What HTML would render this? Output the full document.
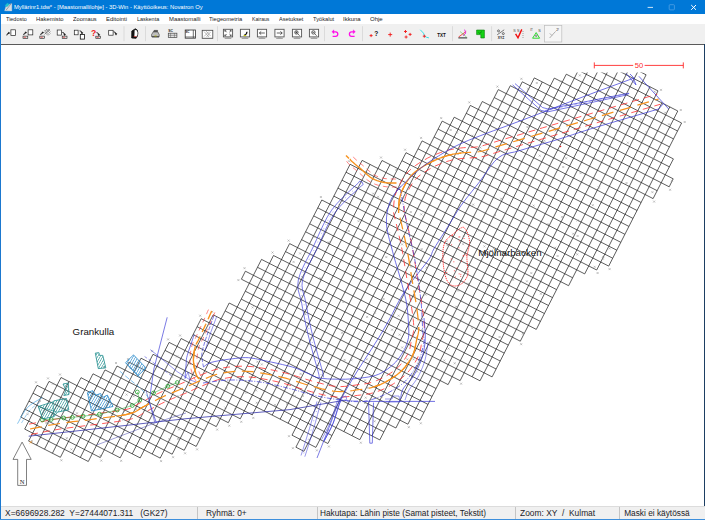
<!DOCTYPE html>
<html><head><meta charset="utf-8"><title>3D-Win</title>
<style>
html,body{margin:0;padding:0;width:705px;height:520px;overflow:hidden;background:#fff;font-family:"Liberation Sans",sans-serif;}
#app{position:relative;width:705px;height:520px;overflow:hidden;background:#fff}

.t{position:absolute;white-space:nowrap;line-height:1;transform-origin:0 50%;display:block}
#title{position:absolute;left:0;top:0;width:705px;height:14.4px;background:#0078d7}
#menu{position:absolute;left:0;top:14.4px;width:705px;height:9.3px;background:#fff}
#tool{position:absolute;left:0;top:23.7px;width:705px;height:20.3px;background:#f0f0f0}
#toolline{position:absolute;left:1px;top:43.9px;width:703px;height:1px;background:#5a5a5a}
#status{position:absolute;left:0;top:505.6px;width:705px;height:14.4px;background:#f0f0f0;border-top:0.6px solid #dcdcdc;box-sizing:border-box}
#lborder{position:absolute;left:0;top:14px;width:1.2px;height:506px;background:#1b78cf}
#rborder{position:absolute;left:704.2px;top:44px;width:0.8px;height:462px;background:#1d3f63}
#bborder{position:absolute;left:0;top:519.3px;width:705px;height:0.7px;background:#3d8fdc}
.ssep{position:absolute;top:506.8px;width:0.8px;height:12.4px;background:#c4c4c4}

</style></head><body><div id="app">
<div id="title"></div>
<div id="menu"></div>
<div id="tool"></div>
<div id="toolline"></div>
<div id="status"></div>
<div id="lborder"></div><div id="rborder"></div><div id="bborder"></div>
<span class="t" style="left:14.40px;top:4.35px;font-size:6.20px;color:#fff;transform:scaleX(0.9393);">Myllärinr1.tdw* - [Maastomallilohje] - 3D-Win - Käyttöoikeus: Novatron Oy</span>
<span class="t" style="left:5.60px;top:16.22px;font-size:6.00px;color:#222;transform:scaleX(0.9083);">Tiedosto</span>
<span class="t" style="left:35.70px;top:16.22px;font-size:6.00px;color:#222;transform:scaleX(0.9739);">Hakemisto</span>
<span class="t" style="left:72.80px;top:16.22px;font-size:6.00px;color:#222;transform:scaleX(0.9477);">Zoomaus</span>
<span class="t" style="left:106.00px;top:16.22px;font-size:6.00px;color:#222;transform:scaleX(0.9838);">Editointi</span>
<span class="t" style="left:136.60px;top:16.22px;font-size:6.00px;color:#222;transform:scaleX(0.9117);">Laskenta</span>
<span class="t" style="left:168.50px;top:16.22px;font-size:6.00px;color:#222;transform:scaleX(0.9841);">Maastomalli</span>
<span class="t" style="left:208.80px;top:16.22px;font-size:6.00px;color:#222;transform:scaleX(0.9543);">Tiegeometria</span>
<span class="t" style="left:252.00px;top:16.22px;font-size:6.00px;color:#222;transform:scaleX(0.8553);">Kairaus</span>
<span class="t" style="left:279.00px;top:16.22px;font-size:6.00px;color:#222;transform:scaleX(0.9224);">Asetukset</span>
<span class="t" style="left:312.80px;top:16.22px;font-size:6.00px;color:#222;transform:scaleX(0.9488);">Työkalut</span>
<span class="t" style="left:343.40px;top:16.22px;font-size:6.00px;color:#222;transform:scaleX(0.9957);">Ikkuna</span>
<span class="t" style="left:370.00px;top:16.22px;font-size:6.00px;color:#222;transform:scaleX(1.0021);">Ohje</span>
<span class="t" style="left:5.00px;top:509.37px;font-size:8.30px;color:#1c1c28;transform:scaleX(1.0168);white-space:pre;">X=6696928.282&nbsp; Y=27444071.311&nbsp;  (GK27)</span>
<span class="t" style="left:205.80px;top:509.37px;font-size:8.30px;color:#1c1c28;transform:scaleX(1.0083);white-space:pre;">Ryhmä: 0+</span>
<span class="t" style="left:320.00px;top:509.37px;font-size:8.30px;color:#1c1c28;transform:scaleX(0.9949);white-space:pre;">Hakutapa: Lähin piste (Samat pisteet, Tekstit)</span>
<span class="t" style="left:520.00px;top:509.37px;font-size:8.30px;color:#1c1c28;transform:scaleX(1.0120);white-space:pre;">Zoom: XY&nbsp; /&nbsp; Kulmat</span>
<span class="t" style="left:624.20px;top:509.37px;font-size:8.30px;color:#1c1c28;transform:scaleX(1.0000);white-space:pre;">Maski ei käytössä</span>
<div class="ssep" style="left:196.5px"></div>
<div class="ssep" style="left:317.0px"></div>
<div class="ssep" style="left:515.0px"></div>
<div class="ssep" style="left:619.3px"></div>
<svg width="705" height="520" viewBox="0 0 705 520" style="position:absolute;left:0;top:0">
<defs><clipPath id="topclip"><rect x="0" y="72.6" width="705" height="440"/></clipPath></defs>
<path clip-path="url(#topclip)" d="M153.0 354.3L327.9 443.5M141.0 358.2L252.3 414.9M292.0 435.2L315.9 447.4M337.9 188.1L552.5 297.6M333.8 196.1L548.5 305.5M261.5 259.4L492.1 376.9M257.5 267.3L480.0 380.8M301.6 239.7L508.3 345.1M289.6 243.6L504.2 353.1M470.3 105.4L653.1 198.6M466.2 113.3L641.1 202.5M510.3 85.7L669.3 166.8M498.3 89.6L673.2 178.8M434.1 137.0L624.9 234.3M422.1 140.9L620.8 242.3M81.0 377.7L200.2 438.5M61.0 377.5L196.2 446.4M229.2 303.0L428.0 404.4M225.2 311.0L423.9 412.3M245.4 271.2L460.1 380.7M241.4 279.2L448.1 384.6M418.0 148.8L616.8 250.2M454.2 117.2L637.1 210.5M442.2 121.1L633.0 218.4M49.0 381.4L184.2 450.3M181.1 338.5L379.8 439.9M169.1 342.4L359.8 439.7M438.1 129.1L628.9 226.4M350.1 164.3L572.7 277.8M346.0 172.2L568.6 285.7M37.0 385.3L172.2 454.2M33.0 393.2L160.2 458.1M165.0 350.4L331.9 435.5M201.2 318.7L407.9 424.2M197.1 326.7L395.9 428.0M402.0 160.7L608.7 266.1M382.0 160.5L596.7 270.0M317.8 207.9L540.4 321.4M313.7 215.9L536.3 329.4M309.7 223.8L524.3 333.3M594.4 58.5L658.0 90.9M582.4 62.4L677.8 111.0M578.3 70.3L681.6 123.0M129.0 362.1L240.3 418.8M295.9 447.2L303.9 451.3M321.8 200.0L544.4 313.5M522.3 81.8L673.4 158.9M273.5 255.5L496.1 369.0M305.6 231.8L520.3 341.2M482.3 101.5L657.2 190.7M117.0 366.0L228.3 422.7M105.0 369.9L216.3 426.6M193.1 334.6L383.9 431.9M28.9 401.2L140.2 457.9M245.3 291.2L436.1 388.5M213.2 314.8L419.9 420.3M406.0 152.7L612.7 258.2M241.2 299.1L432.0 396.4M362.1 160.4L584.7 273.9M566.3 74.2L677.6 131.0M554.3 78.1L673.5 138.9M93.0 373.8L204.3 430.5M285.5 251.6L500.2 361.0M494.3 97.6L669.2 186.8M24.8 409.1L120.2 457.8M20.8 417.1L100.3 457.6M342.0 180.2L556.6 289.6M534.3 77.9L669.5 146.9M614.3 58.6L646.1 74.8M24.7 429.1L88.3 461.5M28.6 441.1L60.4 457.3M153.0 354.3L100.3 457.6M169.1 342.4L112.3 453.7M370.0 164.4L240.3 418.8M382.0 160.5L252.3 414.9M534.3 77.9L351.9 435.7M542.3 82.0L359.8 439.7M422.1 140.9L280.2 419.1M442.2 121.1L288.1 423.2M650.0 86.8L520.3 341.2M658.0 90.9L536.3 329.4M582.4 62.4L395.9 428.0M594.4 58.5L407.9 424.2M669.8 106.9L584.7 273.9M677.8 111.0L596.7 270.0M213.2 314.8L140.2 457.9M245.4 271.2L241.4 279.2M229.2 303.0L152.2 454.0M470.3 105.4L295.9 447.2M482.3 101.5L303.9 451.3M362.1 160.4L228.3 422.7M614.3 58.6L448.1 384.6M622.3 62.7L460.1 380.7M522.3 81.8L343.9 431.6M105.0 369.9L60.4 457.3M117.0 366.0L72.4 453.4M646.1 74.8L492.1 376.9M61.0 377.5L28.6 441.1M69.0 381.5L36.5 445.1M406.0 152.7L272.2 415.1M498.3 89.6L315.9 447.4M273.5 255.5L172.2 454.2M289.6 243.6L184.2 450.3M602.3 62.5L419.9 420.3M201.2 318.7L132.2 453.9M261.5 259.4L160.2 458.1M554.3 78.1L371.9 435.8M566.3 74.2L379.8 439.9M454.2 117.2L292.0 435.2M661.9 102.9L568.6 285.7M141.0 358.2L88.3 461.5M510.3 85.7L327.9 443.5M390.0 164.6L264.3 411.0M638.2 70.8L480.0 380.8M93.0 373.8L52.4 453.3M350.1 164.3L216.3 426.6M630.2 66.7L472.1 376.8M181.1 338.5L120.2 457.8M129.0 362.1L80.3 457.5M81.0 377.7L44.5 449.2M321.8 200.0L196.2 446.4M37.0 385.3L20.8 417.1M49.0 381.4L24.7 429.1M681.6 123.0L608.7 266.1M673.4 158.9L653.1 198.6M673.2 178.8L669.2 186.8" fill="none" stroke="#1e1e1e" stroke-width="0.72"/>
<path d="M26.6 413.2l2 2m0 -2l-2 2M51.9 382.7l2 2m0 -2l-2 2M38.9 400.0l2 2m0 -2l-2 2M45.4 422.0l2 2m0 -2l-2 2M30.8 439.9l2 2m0 -2l-2 2M47.3 422.2l2 2m0 -2l-2 2M76.0 412.3l2 2m0 -2l-2 2M65.8 437.2l2 2m0 -2l-2 2M70.4 448.4l2 2m0 -2l-2 2M98.7 407.9l2 2m0 -2l-2 2M89.0 419.0l2 2m0 -2l-2 2M129.3 367.3l2 2m0 -2l-2 2M125.6 393.6l2 2m0 -2l-2 2M99.4 454.5l2 2m0 -2l-2 2M140.6 388.1l2 2m0 -2l-2 2M132.7 395.2l2 2m0 -2l-2 2M123.0 410.1l2 2m0 -2l-2 2M122.3 418.6l2 2m0 -2l-2 2M135.0 408.2l2 2m0 -2l-2 2M124.8 444.9l2 2m0 -2l-2 2M176.2 355.4l2 2m0 -2l-2 2M170.9 375.7l2 2m0 -2l-2 2M177.2 395.3l2 2m0 -2l-2 2M168.4 438.3l2 2m0 -2l-2 2M178.1 428.5l2 2m0 -2l-2 2M177.0 437.9l2 2m0 -2l-2 2M251.6 306.4l2 2m0 -2l-2 2M257.8 307.8l2 2m0 -2l-2 2M299.1 252.4l2 2m0 -2l-2 2M292.6 260.9l2 2m0 -2l-2 2M289.0 280.8l2 2m0 -2l-2 2M278.2 287.8l2 2m0 -2l-2 2M225.3 387.5l2 2m0 -2l-2 2M224.4 406.6l2 2m0 -2l-2 2M217.9 417.6l2 2m0 -2l-2 2M313.7 235.9l2 2m0 -2l-2 2M278.0 307.5l2 2m0 -2l-2 2M256.5 360.8l2 2m0 -2l-2 2M341.5 200.2l2 2m0 -2l-2 2M327.7 241.3l2 2m0 -2l-2 2M260.8 363.4l2 2m0 -2l-2 2M245.2 391.7l2 2m0 -2l-2 2M234.3 408.3l2 2m0 -2l-2 2M319.3 277.3l2 2m0 -2l-2 2M255.1 389.4l2 2m0 -2l-2 2M255.8 401.8l2 2m0 -2l-2 2M372.2 192.6l2 2m0 -2l-2 2M357.5 220.2l2 2m0 -2l-2 2M347.7 230.0l2 2m0 -2l-2 2M304.1 313.2l2 2m0 -2l-2 2M287.2 344.8l2 2m0 -2l-2 2M395.3 168.8l2 2m0 -2l-2 2M377.1 195.8l2 2m0 -2l-2 2M297.8 342.4l2 2m0 -2l-2 2M274.0 403.9l2 2m0 -2l-2 2M357.9 246.2l2 2m0 -2l-2 2M299.6 372.9l2 2m0 -2l-2 2M286.2 403.0l2 2m0 -2l-2 2M342.4 301.0l2 2m0 -2l-2 2M293.7 395.2l2 2m0 -2l-2 2M402.1 197.4l2 2m0 -2l-2 2M387.9 232.4l2 2m0 -2l-2 2M367.3 268.0l2 2m0 -2l-2 2M341.1 331.8l2 2m0 -2l-2 2M301.8 394.9l2 2m0 -2l-2 2M449.7 129.0l2 2m0 -2l-2 2M409.8 211.0l2 2m0 -2l-2 2M385.3 256.1l2 2m0 -2l-2 2M456.0 131.6l2 2m0 -2l-2 2M420.3 213.4l2 2m0 -2l-2 2M401.1 243.4l2 2m0 -2l-2 2M366.1 315.9l2 2m0 -2l-2 2M343.6 358.9l2 2m0 -2l-2 2M335.5 367.3l2 2m0 -2l-2 2M471.4 134.7l2 2m0 -2l-2 2M456.9 152.9l2 2m0 -2l-2 2M382.5 298.0l2 2m0 -2l-2 2M373.9 311.7l2 2m0 -2l-2 2M350.3 359.2l2 2m0 -2l-2 2M420.7 248.1l2 2m0 -2l-2 2M410.0 265.7l2 2m0 -2l-2 2M365.8 358.3l2 2m0 -2l-2 2M326.9 429.2l2 2m0 -2l-2 2M492.3 120.1l2 2m0 -2l-2 2M479.4 146.6l2 2m0 -2l-2 2M425.6 266.6l2 2m0 -2l-2 2M397.6 314.7l2 2m0 -2l-2 2M391.1 328.7l2 2m0 -2l-2 2M364.0 379.3l2 2m0 -2l-2 2M527.1 87.7l2 2m0 -2l-2 2M445.7 240.2l2 2m0 -2l-2 2M446.4 244.2l2 2m0 -2l-2 2M398.6 333.7l2 2m0 -2l-2 2M366.6 386.9l2 2m0 -2l-2 2M364.7 396.7l2 2m0 -2l-2 2M363.9 402.1l2 2m0 -2l-2 2M535.8 82.0l2 2m0 -2l-2 2M472.2 203.6l2 2m0 -2l-2 2M424.7 293.6l2 2m0 -2l-2 2M401.2 346.5l2 2m0 -2l-2 2M380.6 396.0l2 2m0 -2l-2 2M526.5 126.1l2 2m0 -2l-2 2M496.4 169.8l2 2m0 -2l-2 2M462.8 234.9l2 2m0 -2l-2 2M462.1 243.2l2 2m0 -2l-2 2M421.2 329.0l2 2m0 -2l-2 2M406.3 358.4l2 2m0 -2l-2 2M373.6 420.3l2 2m0 -2l-2 2M559.4 80.3l2 2m0 -2l-2 2M508.5 182.3l2 2m0 -2l-2 2M500.2 197.7l2 2m0 -2l-2 2M478.0 229.4l2 2m0 -2l-2 2M412.5 358.3l2 2m0 -2l-2 2M519.2 181.4l2 2m0 -2l-2 2M505.6 192.3l2 2m0 -2l-2 2M493.9 214.0l2 2m0 -2l-2 2M483.4 245.4l2 2m0 -2l-2 2M467.1 282.7l2 2m0 -2l-2 2M457.0 289.6l2 2m0 -2l-2 2M455.2 305.7l2 2m0 -2l-2 2M429.2 342.0l2 2m0 -2l-2 2M416.2 370.6l2 2m0 -2l-2 2M578.8 74.4l2 2m0 -2l-2 2M554.7 129.6l2 2m0 -2l-2 2M543.4 139.8l2 2m0 -2l-2 2M538.7 154.7l2 2m0 -2l-2 2M492.8 247.4l2 2m0 -2l-2 2M458.6 319.5l2 2m0 -2l-2 2M487.1 284.8l2 2m0 -2l-2 2M447.5 347.6l2 2m0 -2l-2 2M443.3 359.5l2 2m0 -2l-2 2M532.6 204.6l2 2m0 -2l-2 2M471.2 327.3l2 2m0 -2l-2 2M453.7 362.3l2 2m0 -2l-2 2M565.2 157.3l2 2m0 -2l-2 2M562.2 166.0l2 2m0 -2l-2 2M589.4 138.4l2 2m0 -2l-2 2M547.1 223.3l2 2m0 -2l-2 2M520.2 260.1l2 2m0 -2l-2 2M512.0 278.8l2 2m0 -2l-2 2M579.6 172.1l2 2m0 -2l-2 2M561.0 215.9l2 2m0 -2l-2 2M530.3 272.1l2 2m0 -2l-2 2M525.9 280.3l2 2m0 -2l-2 2M498.6 336.0l2 2m0 -2l-2 2M554.2 246.7l2 2m0 -2l-2 2M546.3 253.9l2 2m0 -2l-2 2M634.2 98.7l2 2m0 -2l-2 2M576.5 219.5l2 2m0 -2l-2 2M572.2 232.7l2 2m0 -2l-2 2M556.6 255.0l2 2m0 -2l-2 2M539.9 292.8l2 2m0 -2l-2 2M524.8 309.8l2 2m0 -2l-2 2M521.8 332.8l2 2m0 -2l-2 2M653.7 90.7l2 2m0 -2l-2 2M640.1 118.5l2 2m0 -2l-2 2M626.8 141.7l2 2m0 -2l-2 2M597.8 186.5l2 2m0 -2l-2 2M591.8 204.2l2 2m0 -2l-2 2M576.6 235.0l2 2m0 -2l-2 2M645.6 131.2l2 2m0 -2l-2 2M576.3 253.3l2 2m0 -2l-2 2M664.2 111.7l2 2m0 -2l-2 2M625.5 182.0l2 2m0 -2l-2 2M668.0 123.3l2 2m0 -2l-2 2M602.2 256.1l2 2m0 -2l-2 2M593.6 265.8l2 2m0 -2l-2 2M652.7 157.8l2 2m0 -2l-2 2M608.7 247.4l2 2m0 -2l-2 2M601.9 257.7l2 2m0 -2l-2 2M651.4 191.2l2 2m0 -2l-2 2M670.9 179.7l2 2m0 -2l-2 2M660.0 88.9l2 2m0 -2l-2 2M679.8 109.0l2 2m0 -2l-2 2M683.7 121.0l2 2m0 -2l-2 2M669.1 188.8l2 2m0 -2l-2 2M653.1 200.6l2 2m0 -2l-2 2M608.6 268.1l2 2m0 -2l-2 2M596.6 272.0l2 2m0 -2l-2 2M520.2 343.2l2 2m0 -2l-2 2M460.1 382.7l2 2m0 -2l-2 2M419.8 422.3l2 2m0 -2l-2 2M407.8 426.2l2 2m0 -2l-2 2M359.8 441.7l2 2m0 -2l-2 2M327.9 445.5l2 2m0 -2l-2 2M315.9 449.4l2 2m0 -2l-2 2M291.9 447.2l2 2m0 -2l-2 2M288.0 435.2l2 2m0 -2l-2 2M252.3 416.9l2 2m0 -2l-2 2M240.3 420.8l2 2m0 -2l-2 2M228.3 424.7l2 2m0 -2l-2 2M216.2 428.6l2 2m0 -2l-2 2M196.1 448.4l2 2m0 -2l-2 2M184.1 452.3l2 2m0 -2l-2 2M172.1 456.2l2 2m0 -2l-2 2M160.1 460.1l2 2m0 -2l-2 2M120.2 459.8l2 2m0 -2l-2 2M100.3 459.6l2 2m0 -2l-2 2M60.4 459.3l2 2m0 -2l-2 2M35.0 381.3l2 2m0 -2l-2 2M47.0 377.4l2 2m0 -2l-2 2M59.0 373.5l2 2m0 -2l-2 2M103.0 365.9l2 2m0 -2l-2 2M115.0 362.0l2 2m0 -2l-2 2M127.0 358.1l2 2m0 -2l-2 2M151.0 350.3l2 2m0 -2l-2 2M167.1 338.4l2 2m0 -2l-2 2M179.1 334.5l2 2m0 -2l-2 2M199.2 314.7l2 2m0 -2l-2 2M211.2 310.8l2 2m0 -2l-2 2M237.4 279.1l2 2m0 -2l-2 2M243.5 267.2l2 2m0 -2l-2 2M271.5 251.5l2 2m0 -2l-2 2M287.6 239.6l2 2m0 -2l-2 2M319.9 196.0l2 2m0 -2l-2 2M348.1 160.3l2 2m0 -2l-2 2M380.0 156.5l2 2m0 -2l-2 2M404.1 148.7l2 2m0 -2l-2 2M420.1 136.9l2 2m0 -2l-2 2M440.2 117.1l2 2m0 -2l-2 2M468.3 101.4l2 2m0 -2l-2 2M496.4 85.6l2 2m0 -2l-2 2M520.4 77.8l2 2m0 -2l-2 2" fill="none" stroke="#8c8c8c" stroke-width="0.5"/>
<path d="M28.7 436.2L84.9 430.0L186.0 418.7L290.0 409.6L346.0 400.0" fill="none" stroke="#2a2aa6" stroke-width="0.75" stroke-linejoin="round" stroke-linecap="butt" />
<path d="M96.7 445.0L156.7 422.3L186.0 413.0" fill="none" stroke="#2a2aa6" stroke-width="0.55" opacity="0.8" stroke-linejoin="round" stroke-linecap="butt" />
<path d="M324.0 441.0L325.3 438.7L327.0 435.5L329.1 431.7L331.2 427.6L333.0 423.5L334.5 419.4L335.7 415.1L337.0 410.6L338.5 406.1L340.3 401.4L342.3 397.0L344.5 392.8L346.9 388.4L350.0 383.2L353.8 376.8L358.8 368.7L364.9 359.3L371.4 349.2L377.8 339.2L383.4 330.0L388.1 321.7L392.4 313.7L396.3 306.0L400.3 298.6L404.6 291.5L409.5 284.4L414.8 277.4L420.1 270.8L424.8 264.9L428.4 260.0L430.5 256.7L431.5 254.6L431.9 253.2L432.5 251.5L433.8 249.0L436.0 245.4L438.6 241.2L441.5 236.7L444.5 232.1L447.3 227.6L449.9 223.3L452.4 219.1L455.0 214.8L457.7 210.5L460.7 206.0L464.1 201.3L467.8 196.5L471.7 191.7L475.6 186.8L479.5 181.9L483.2 176.8L486.9 171.4L490.6 166.2L494.4 161.5L498.4 157.7L502.3 155.2L506.0 153.8L509.9 152.9L514.5 152.0L520.0 150.5L526.9 148.4L535.0 146.1L543.6 143.6L552.1 141.2L560.0 138.8L566.6 136.7L572.3 134.8L578.1 132.9L584.9 130.7L593.5 128.0L605.6 124.4L620.4 120.1L635.8 115.6L649.3 111.7L658.7 109.0" fill="none" stroke="#3333d6" stroke-width="0.7" stroke-linejoin="round" stroke-linecap="butt" />
<path d="M658.7 109.0L663.0 104.0" fill="none" stroke="#3333d6" stroke-width="0.7" stroke-linejoin="round" stroke-linecap="butt" />
<path d="M30.0 429.0L33.1 428.4L37.4 427.6L42.5 426.6L48.1 425.5L54.1 424.5L60.0 423.5L66.2 422.6L73.0 421.7L80.0 420.8L87.1 420.0L93.8 419.1L100.0 418.3L105.7 417.5L111.3 416.8L116.6 416.1L121.5 415.4L125.9 414.6L129.8 413.7L132.9 412.7L135.2 411.8L137.0 410.7L138.7 409.6L140.6 408.3L143.0 407.0L145.9 405.5L149.1 403.8L152.4 402.0L155.9 400.2L159.4 398.4L163.0 396.7L166.8 395.0L170.8 393.3L174.9 391.6L178.9 390.0L182.7 388.4L186.0 387.0L188.8 385.8L191.1 384.7L193.2 383.7L195.2 382.8L197.4 381.9L200.0 380.8L202.9 379.6L206.0 378.3L209.2 377.0L212.6 375.7L216.2 374.5L220.0 373.6L224.0 372.8L228.3 372.2L232.7 371.7L237.3 371.3L242.1 371.2L247.0 371.3L252.2 371.7L257.6 372.4L263.1 373.3L268.8 374.4L274.4 375.6L280.0 376.8L285.6 378.2L291.3 379.9L297.1 381.7L302.7 383.5L308.0 385.1L313.0 386.5L317.5 387.7L321.7 388.8L325.6 389.7L329.4 390.5L333.2 391.1L337.0 391.5L341.0 391.6L345.1 391.4L349.2 391.0L353.1 390.5L356.7 389.9L360.0 389.5L362.8 389.2L365.2 388.9L367.3 388.5L369.3 388.1L371.3 387.7L373.5 387.0L375.9 386.2L378.3 385.3L380.8 384.3L383.3 383.2L385.8 381.9L388.3 380.5L390.8 379.0L393.4 377.3L396.0 375.5L398.5 373.5L400.8 371.5L403.0 369.4L405.0 367.1L406.9 364.7L408.7 362.2L410.3 359.7L411.8 357.1L413.0 354.6L414.0 352.1L414.7 349.6L415.3 347.0L415.7 344.5L416.2 342.1L416.6 339.8L417.1 337.8L417.6 336.0L418.1 334.2L418.4 332.5L418.7 330.4L418.8 328.0L418.7 325.2L418.5 322.0L418.1 318.6L417.7 315.1L417.2 311.4L416.7 307.7L416.2 304.0L415.6 300.4L414.9 296.6L414.3 292.6L413.5 288.3L412.7 283.5L411.8 278.1L410.8 272.0L409.8 265.6L408.8 259.2L407.7 252.9L406.6 247.0L405.4 241.3L404.2 235.6L402.9 230.0L401.7 224.8L400.6 220.4L399.8 216.8L399.2 214.5L398.9 213.4L398.6 212.9L398.6 212.7L398.6 212.1L398.6 210.8L398.7 208.7L398.7 206.2L398.9 203.5L399.2 200.5L399.8 197.5L400.6 194.6L401.7 191.6L403.1 188.5L404.8 185.2L406.6 182.1L408.6 179.1L410.7 176.4L413.0 174.0L415.5 171.8L418.2 169.7L421.1 167.8L423.9 166.0L426.8 164.3L429.7 162.7L432.8 161.2L435.9 159.8L439.0 158.5L442.1 157.3L445.0 156.3L447.8 155.5L450.5 154.8L453.1 154.2L455.7 153.8L458.4 153.4L461.2 153.0L464.2 152.7L467.2 152.5L470.4 152.4L473.5 152.3L476.8 152.0L480.0 151.5L483.1 150.8L485.9 150.0L488.9 149.1L492.0 148.1L495.7 146.9L500.0 145.6L505.1 144.1L510.9 142.4L517.1 140.6L523.6 138.7L530.3 136.7L537.0 134.7L543.9 132.7L551.0 130.6L558.3 128.4L565.7 126.2L572.9 124.1L580.0 122.0L586.9 120.0L593.6 118.0L600.3 116.1L606.9 114.1L613.4 112.2L620.0 110.3L627.0 108.3L634.4 106.1L641.9 103.9L648.7 101.9L654.5 100.2L658.7 99.0" fill="none" stroke="#f7921e" stroke-width="1.25" stroke-dasharray="12 6.5" stroke-linejoin="round" stroke-linecap="butt" />
<path d="M116.6 416.1L121.5 415.4L125.9 414.6L129.8 413.7L132.9 412.7L135.2 411.8L137.0 410.7L138.7 409.6L140.6 408.3L143.0 407.0L145.9 405.5L149.1 403.8" fill="none" stroke="#f7921e" stroke-width="1.3" stroke-linejoin="round" stroke-linecap="butt" />
<path d="M373.5 387.0L375.9 386.2L378.3 385.3L380.8 384.3L383.3 383.2L385.8 381.9L388.3 380.5L390.8 379.0L393.4 377.3L396.0 375.5L398.5 373.5L400.8 371.5L403.0 369.4L405.0 367.1L406.9 364.7L408.7 362.2L410.3 359.7L411.8 357.1L413.0 354.6L414.0 352.1L414.7 349.6L415.3 347.0L415.7 344.5L416.2 342.1L416.6 339.8L417.1 337.8L417.6 336.0" fill="none" stroke="#f7921e" stroke-width="1.3" stroke-linejoin="round" stroke-linecap="butt" />
<path d="M398.6 212.9L398.6 212.7L398.6 212.1L398.6 210.8L398.7 208.7L398.7 206.2L398.9 203.5L399.2 200.5L399.8 197.5L400.6 194.6L401.7 191.6L403.1 188.5L404.8 185.2L406.6 182.1L408.6 179.1L410.7 176.4L413.0 174.0L415.5 171.8L418.2 169.7L421.1 167.8L423.9 166.0L426.8 164.3L429.7 162.7L432.8 161.2L435.9 159.8L439.0 158.5L442.1 157.3L445.0 156.3L447.8 155.5L450.5 154.8L453.1 154.2L455.7 153.8L458.4 153.4L461.2 153.0" fill="none" stroke="#f7921e" stroke-width="1.3" stroke-linejoin="round" stroke-linecap="butt" />
<path d="M29.1 424.1L32.2 423.5L36.5 422.7L41.6 421.7L47.3 420.6L53.2 419.5L59.2 418.6L65.5 417.7L72.3 416.8L79.4 415.9L86.4 415.0L93.2 414.2L99.3 413.3L105.1 412.6L110.6 411.8L115.9 411.1L120.7 410.4L124.9 409.7L128.5 408.9L131.2 408.0L133.0 407.3L134.4 406.4L136.0 405.4L138.0 404.1L140.6 402.6L143.6 401.1L146.7 399.4L150.1 397.6L153.6 395.8L157.2 393.9L160.9 392.2L164.8 390.4L168.8 388.7L173.0 387.0L177.0 385.3L180.7 383.8L184.0 382.4L186.7 381.2L189.0 380.2L191.1 379.2L193.2 378.2L195.5 377.2L198.1 376.2L201.0 375.0L204.0 373.7L207.4 372.3L211.0 370.9L214.8 369.7L218.9 368.7L223.2 367.9L227.6 367.2L232.2 366.7L237.0 366.3L242.1 366.2L247.3 366.3L252.7 366.7L258.3 367.5L264.0 368.4L269.8 369.5L275.5 370.7L281.2 371.9L286.9 373.4L292.8 375.1L298.6 376.9L304.2 378.7L309.4 380.3L314.3 381.7L318.8 382.8L322.9 383.9L326.7 384.9L330.3 385.6L333.8 386.2L337.3 386.5L340.9 386.6L344.7 386.4L348.6 386.0L352.4 385.5L356.0 385.0L359.4 384.5L362.2 384.2L364.5 383.9L366.4 383.6L368.2 383.3L370.0 382.8L372.0 382.2L374.2 381.5L376.5 380.6L378.8 379.7L381.2 378.6L383.5 377.5L385.8 376.2L388.1 374.7L390.6 373.1L393.0 371.4L395.3 369.7L397.5 367.8L399.4 365.9L401.2 363.9L402.9 361.7L404.5 359.4L406.0 357.1L407.3 354.8L408.4 352.6L409.3 350.5L409.9 348.3L410.4 346.0L410.8 343.6L411.2 341.2L411.7 338.7L412.3 336.5L412.8 334.6L413.2 333.1L413.5 331.6L413.7 330.0L413.8 328.0L413.7 325.4L413.5 322.5L413.2 319.2L412.7 315.7L412.3 312.1L411.7 308.4L411.2 304.8L410.7 301.2L410.0 297.5L409.3 293.5L408.6 289.1L407.8 284.3L406.9 278.9L405.9 272.8L404.9 266.4L403.8 260.0L402.8 253.7L401.7 248.0L400.6 242.4L399.3 236.7L398.0 231.1L396.8 226.0L395.7 221.5L394.9 217.9L394.4 215.8L394.2 215.1L394.1 214.9L393.6 213.3L393.6 212.0L393.6 210.6L393.7 208.6L393.7 206.0L393.9 203.0L394.3 199.8L394.9 196.4L395.9 193.0L397.1 189.7L398.6 186.3L400.4 182.9L402.3 179.5L404.5 176.2L406.9 173.1L409.6 170.4L412.4 167.9L415.3 165.7L418.3 163.6L421.3 161.7L424.3 160.0L427.4 158.2L430.6 156.6L433.9 155.2L437.2 153.8L440.4 152.6L443.5 151.5L446.4 150.6L449.3 149.9L452.1 149.3L454.9 148.9L457.7 148.4L460.6 148.0L463.8 147.7L467.0 147.5L470.1 147.4L473.2 147.3L476.2 147.0L479.1 146.6L481.9 146.0L484.5 145.2L487.3 144.4L490.5 143.3L494.2 142.2L498.6 140.8L503.7 139.3L509.4 137.6L515.7 135.8L522.2 133.9L528.9 131.9L535.6 129.9L542.4 127.9L549.6 125.8L556.9 123.6L564.3 121.4L571.5 119.3L578.6 117.2L585.4 115.2L592.2 113.2L598.9 111.3L605.5 109.3L612.0 107.4L618.6 105.5L625.6 103.5L633.0 101.3L640.4 99.1L647.3 97.1L653.1 95.4L657.3 94.2" fill="none" stroke="#ff2e2e" stroke-width="0.8" stroke-dasharray="7 5" stroke-linejoin="round" stroke-linecap="butt" />
<path d="M31.0 434.4L34.2 433.8L38.5 433.0L43.5 432.0L49.1 430.9L55.0 429.9L60.8 428.9L67.0 428.1L73.7 427.2L80.7 426.3L87.7 425.4L94.5 424.6L100.7 423.8L106.5 423.0L112.0 422.3L117.3 421.5L122.4 420.8L127.0 420.0L131.2 419.0L134.8 417.9L137.6 416.7L139.9 415.4L141.7 414.2L143.4 413.1L145.6 411.8L148.5 410.4L151.6 408.7L155.0 406.9L158.4 405.1L161.8 403.4L165.3 401.7L169.0 400.0L172.9 398.4L177.0 396.7L181.0 395.0L184.8 393.5L188.2 392.1L191.0 390.8L193.4 389.7L195.5 388.7L197.5 387.8L199.6 386.9L202.1 385.9L205.0 384.7L208.1 383.4L211.2 382.1L214.4 380.9L217.7 379.8L221.2 379.0L225.0 378.3L229.0 377.6L233.2 377.1L237.6 376.8L242.1 376.7L246.7 376.8L251.6 377.2L256.8 377.8L262.2 378.7L267.7 379.8L273.3 380.9L278.7 382.1L284.2 383.5L289.7 385.2L295.4 386.9L301.0 388.7L306.5 390.4L311.6 391.8L316.1 393.0L320.4 394.1L324.4 395.1L328.4 395.9L332.5 396.6L336.7 397.0L341.1 397.1L345.5 396.9L349.8 396.4L353.8 395.9L357.5 395.4L360.7 395.0L363.5 394.6L365.9 394.3L368.2 394.0L370.4 393.5L372.7 393.0L375.2 392.2L377.7 391.4L380.3 390.4L383.0 389.3L385.7 388.1L388.4 386.7L391.1 385.2L393.8 383.6L396.5 381.8L399.2 379.9L401.9 377.8L404.5 375.6L407.0 373.2L409.2 370.7L411.3 368.0L413.3 365.3L415.0 362.5L416.6 359.7L418.0 356.8L419.2 353.9L420.1 350.9L420.7 348.1L421.2 345.5L421.6 343.1L422.0 341.0L422.4 339.1L422.9 337.4L423.4 335.5L423.9 333.4L424.2 330.9L424.3 328.0L424.2 324.9L424.0 321.5L423.6 318.0L423.2 314.4L422.7 310.7L422.1 306.9L421.6 303.2L421.0 299.5L420.4 295.7L419.7 291.7L418.9 287.4L418.1 282.6L417.2 277.2L416.3 271.1L415.3 264.7L414.2 258.2L413.1 251.9L412.0 246.0L410.8 240.2L409.5 234.4L408.3 228.7L407.0 223.6L406.0 219.1L405.2 215.5L404.5 213.1L404.0 211.5L403.7 210.8L404.0 212.0L404.0 212.2L404.1 211.0L404.2 208.9L404.2 206.5L404.4 203.9L404.7 201.3L405.1 198.8L405.8 196.3L406.8 193.7L408.1 190.8L409.6 187.9L411.3 185.0L413.0 182.3L414.9 180.0L416.8 178.0L419.0 176.0L421.5 174.2L424.1 172.4L426.8 170.7L429.5 169.1L432.3 167.5L435.1 166.1L438.1 164.8L441.0 163.6L443.9 162.5L446.7 161.5L449.3 160.8L451.7 160.1L454.1 159.6L456.6 159.2L459.2 158.8L461.9 158.5L464.6 158.2L467.5 158.0L470.6 157.9L473.9 157.7L477.4 157.4L481.0 156.9L484.4 156.2L487.5 155.3L490.5 154.4L493.7 153.3L497.3 152.2L501.6 150.9L506.7 149.4L512.4 147.7L518.6 145.9L525.1 143.9L531.8 142.0L538.6 140.0L545.4 138.0L552.6 135.8L559.9 133.7L567.2 131.5L574.5 129.4L581.6 127.3L588.4 125.3L595.1 123.3L601.8 121.3L608.4 119.4L615.0 117.5L621.5 115.6L628.5 113.5L636.0 111.4L643.4 109.2L650.3 107.2L656.0 105.5L660.2 104.3" fill="none" stroke="#ff2e2e" stroke-width="0.8" stroke-dasharray="7 5" stroke-linejoin="round" stroke-linecap="butt" />
<path d="M203.5 367.0L204.4 366.3L205.5 365.4L207.0 364.3L209.0 363.2L211.5 362.3L214.9 361.5L219.1 360.7L223.7 360.0L228.2 359.3L232.3 358.8L235.8 358.4L239.0 358.0L242.1 357.7L245.2 357.6L248.5 357.7L251.9 358.1L255.4 358.7L259.0 359.4L262.8 360.3L267.0 361.2L271.8 362.2L277.1 363.3L282.6 364.6L287.8 365.8L292.3 367.0L296.0 368.2L299.1 369.4L301.8 370.7L304.4 371.9L307.0 373.0L309.5 374.1L311.7 375.3L313.9 376.3L316.3 377.3L319.4 378.0L323.2 378.5L327.7 378.9L332.4 379.1L337.1 379.2L341.5 379.2L345.6 379.2L349.7 379.0L353.6 378.8L357.5 378.4L361.2 378.0L364.9 377.5L368.4 377.0L371.9 376.3L375.2 375.5L378.5 374.3L381.7 372.8L384.8 370.9L387.8 368.9L390.6 366.7L393.2 364.5L395.6 362.2L397.7 359.7L399.7 357.1L401.4 354.5L403.0 352.0L404.4 349.5L405.6 347.1L406.5 344.6L407.4 342.2L408.0 339.8L408.5 337.6L408.7 335.6L408.8 333.5L408.8 331.1L408.7 327.9L408.5 323.8L408.2 319.1L407.9 314.0L407.3 308.7L406.6 303.7L405.7 298.9L404.6 294.2L403.3 289.4L402.0 284.5L400.6 279.4L399.1 274.0L397.4 268.4L395.7 262.7L394.0 256.9L392.5 251.2L391.0 245.4L389.4 239.6L388.0 233.8L386.9 228.2L386.4 222.9L386.5 217.9L387.0 213.2L387.9 208.7L389.1 204.5L390.5 200.7L392.3 197.1L394.6 193.8L397.0 190.8L399.1 188.3L400.6 186.5" fill="none" stroke="#3333d6" stroke-width="0.7" stroke-linejoin="round" stroke-linecap="butt" />
<path d="M203.0 383.0L206.6 382.5L211.7 381.8L217.7 381.0L224.0 380.3L230.0 380.0L235.8 380.0L241.9 380.2L248.0 380.7L254.1 381.3L260.0 382.0L265.6 382.9L271.0 384.0L276.4 385.3L281.8 386.6L287.4 388.0L293.3 389.5L299.3 391.2L305.4 393.0L311.4 394.6L317.0 396.0L322.3 397.1L327.3 398.0L332.1 398.8L336.8 399.4L341.5 400.0L346.1 400.6L350.6 401.2L354.9 401.6L359.3 401.7L363.7 401.4L368.2 400.6L372.7 399.3L377.1 397.8L381.5 396.0L385.8 394.0L390.0 391.8L394.2 389.4L398.3 386.8L402.1 384.0L405.5 381.0L408.5 377.8L411.2 374.3L413.7 370.6L415.8 366.9L417.8 363.0L419.5 358.9L421.1 354.4L422.3 350.0L423.3 345.8L424.0 342.3L424.2 339.9L424.1 338.5L423.7 337.2L423.2 335.3L422.8 332.0L422.5 327.1L422.3 321.0L421.9 314.2L421.5 306.9L420.8 299.6L419.9 292.0L418.8 283.8L417.5 275.4L416.1 267.1L414.7 259.2L413.2 251.6L411.5 244.2L409.8 236.9L408.1 229.8L406.6 222.9L405.2 215.7L403.8 208.1L402.5 201.0L401.4 194.9L400.6 190.6" fill="none" stroke="#3333d6" stroke-width="0.7" stroke-dasharray="5 1.5 1 1.5" stroke-linejoin="round" stroke-linecap="butt" />
<path d="M400.6 399.0L400.8 397.7L401.0 395.8L401.4 393.6L402.0 391.3L403.0 389.0L404.5 386.8L406.5 384.5L408.7 382.2L411.0 379.6L413.0 376.8L414.9 373.7L416.7 370.4L418.5 366.8L420.1 363.2L421.5 359.5L422.6 355.7L423.6 351.9L424.3 347.9L424.9 343.9L425.2 339.8L425.3 335.2L425.0 330.2L424.6 325.3L424.2 321.0L424.0 318.0" fill="none" stroke="#3333d6" stroke-width="0.7" stroke-linejoin="round" stroke-linecap="butt" />
<path d="M405.0 400.0L405.5 398.7L406.1 396.9L406.8 394.7L407.8 392.4L409.0 390.0L410.5 387.7L412.3 385.2L414.3 382.6L416.2 379.9L418.0 377.0L419.6 373.9L421.1 370.5L422.6 367.1L423.9 363.5L425.0 360.0L425.9 356.2L426.6 352.0L427.2 348.0L427.7 344.5L428.0 342.0" fill="none" stroke="#3333d6" stroke-width="0.5" stroke-linejoin="round" stroke-linecap="butt" />
<path d="M363.7 401.4L435.0 401.4" fill="none" stroke="#3333d6" stroke-width="0.7" stroke-linejoin="round" stroke-linecap="butt" />
<path d="M368.6 402.6L369.8 443.2L372.3 443.2L373.5 402.6" fill="none" stroke="#3333d6" stroke-width="0.65" stroke-linejoin="round" stroke-linecap="butt" />
<path d="M385.0 399.0L392.0 399.0L393.0 396.0L399.0 396.0L400.0 402.0L386.0 402.0" fill="none" stroke="#3333d6" stroke-width="0.5" stroke-linejoin="round" stroke-linecap="butt" />
<path d="M340.0 398.0L346.0 396.0L347.0 401.0L358.0 401.0" fill="none" stroke="#3333d6" stroke-width="0.5" stroke-linejoin="round" stroke-linecap="butt" />
<path d="M396.1 191.3L400.5 187.0L406.7 180.9L413.8 174.2L420.4 168.4L426.5 163.8L432.5 159.7L438.6 155.9L444.6 152.3L450.0 149.2L454.9 146.5L460.7 143.7L468.8 140.2L480.1 135.8L493.6 130.7L508.2 125.4L522.6 120.0L536.8 114.6L551.2 109.0L565.8 103.4L580.0 98.0L595.1 92.3L610.9 86.5L624.9 81.4L634.6 77.8" fill="none" stroke="#3333d6" stroke-width="0.7" stroke-linejoin="round" stroke-linecap="butt" />
<path d="M638.9 76.3L668.7 109.0" fill="none" stroke="#3333d6" stroke-width="0.7" stroke-linejoin="round" stroke-linecap="butt" />
<path d="M626.0 73.5L636.0 84.9L633.0 77.0L630.0 74.0" fill="none" stroke="#3333d6" stroke-width="0.7" stroke-linejoin="round" stroke-linecap="butt" />
<path d="M512.6 84.9L541.0 110.4L548.0 111.8L627.5 94.8L629.0 93.2L548.0 109.0L542.5 107.5L515.0 83.6" fill="none" stroke="#3333d6" stroke-width="0.65" stroke-linejoin="round" stroke-linecap="butt" />
<path d="M545.0 110.5L626.0 93.8" fill="none" stroke="#3333d6" stroke-width="0.4" stroke-dasharray="3 2" stroke-linejoin="round" stroke-linecap="butt" />
<path d="M211.7 311.0L210.9 312.8L209.8 315.2L208.5 318.2L207.1 321.2L205.8 324.2L204.4 327.2L202.9 330.5L201.4 333.7L200.0 336.7L198.8 339.2L197.9 341.0L197.1 342.4L196.5 343.5L195.9 344.6L195.4 346.2L194.9 348.2L194.4 350.6L194.0 353.0L193.7 355.5L193.5 357.7L193.4 359.7L193.5 361.6L193.7 363.5L193.9 365.3L194.2 367.0L194.6 368.7L195.0 370.5L195.5 372.2L196.0 373.7L196.5 375.0L197.0 376.1L197.6 377.1L198.2 377.9L198.7 378.5L199.0 379.0" fill="none" stroke="#f7921e" stroke-width="1.4" stroke-dasharray="9 5" stroke-linejoin="round" stroke-linecap="butt" />
<path d="M195.4 346.2L194.9 348.2L194.4 350.6L194.0 353.0L193.7 355.5L193.5 357.7L193.4 359.7L193.5 361.6L193.7 363.5L193.9 365.3L194.2 367.0L194.6 368.7L195.0 370.5L195.5 372.2L196.0 373.7L196.5 375.0L197.0 376.1L197.6 377.1L198.2 377.9L198.7 378.5L199.0 379.0" fill="none" stroke="#f7921e" stroke-width="1.4" stroke-linejoin="round" stroke-linecap="butt" />
<path d="M214.9 312.4L214.1 314.2L213.0 316.7L211.7 319.6L210.3 322.7L209.0 325.7L207.6 328.7L206.1 331.9L204.6 335.2L203.2 338.2L201.9 340.7L201.0 342.7L200.1 344.1L199.6 345.1L199.2 345.9L198.8 347.2L198.3 349.0L197.8 351.2L197.5 353.6L197.2 355.8L197.0 357.9L196.9 359.7L197.0 361.4L197.2 363.1L197.4 364.7L197.6 366.4L198.0 368.0L198.4 369.6L198.8 371.1L199.3 372.5L199.7 373.6L200.1 374.5L200.5 375.2L201.0 375.8L201.5 376.4L201.8 377.0" fill="none" stroke="#ff2e2e" stroke-width="0.6" stroke-dasharray="5 4" stroke-linejoin="round" stroke-linecap="butt" />
<path d="M208.5 309.6L207.7 311.3L206.6 313.8L205.3 316.7L204.0 319.8L202.6 322.7L201.2 325.7L199.7 329.0L198.2 332.2L196.8 335.2L195.7 337.7L194.8 339.4L194.1 340.6L193.4 341.8L192.7 343.4L192.0 345.2L191.5 347.5L191.0 349.9L190.5 352.5L190.2 355.1L190.0 357.5L189.9 359.7L190.0 361.9L190.2 363.9L190.5 365.8L190.8 367.6L191.1 369.5L191.6 371.4L192.2 373.2L192.7 374.8L193.3 376.4L193.9 377.8L194.7 379.0L195.3 379.9L195.8 380.6L196.2 381.0" fill="none" stroke="#ff2e2e" stroke-width="0.6" stroke-dasharray="5 4" stroke-linejoin="round" stroke-linecap="butt" />
<path d="M194.2 334.6L193.2 337.6L191.7 342.0L190.0 347.0L188.4 351.7L187.3 355.4L186.7 357.7L186.4 359.2L186.4 360.4L186.3 361.6L186.2 363.5L185.9 366.3L185.7 369.7L185.4 373.2L185.2 376.3L185.0 378.5" fill="none" stroke="#3333d6" stroke-width="0.65" stroke-linejoin="round" stroke-linecap="butt" />
<path d="M213.8 316.0L213.0 318.2L211.9 321.2L210.6 324.8L209.2 328.6L208.0 332.3L206.8 336.0L205.4 340.0L204.2 344.0L203.1 347.7L202.3 350.8L201.9 353.3L201.8 355.3L201.9 356.9L202.1 358.4L202.3 360.0L202.5 361.7L202.8 363.3L203.0 364.8L203.3 366.1L203.5 367.0" fill="none" stroke="#3333d6" stroke-width="0.65" stroke-dasharray="4 1.5" stroke-linejoin="round" stroke-linecap="butt" />
<path d="M216.5 317.0L210.5 333.0L205.0 351.0" fill="none" stroke="#3333d6" stroke-width="0.5" stroke-linejoin="round" stroke-linecap="butt" />
<path d="M185.0 378.5L188.0 372.0L190.0 380.0L196.0 382.0" fill="none" stroke="#3333d6" stroke-width="0.5" stroke-linejoin="round" stroke-linecap="butt" />
<path d="M350.0 159.0L350.2 159.3L350.4 159.6L350.7 160.1L351.2 160.7L352.0 161.5L353.2 162.5L354.6 163.8L356.3 165.2L358.2 166.7L360.2 168.4L362.4 170.3L364.8 172.5L367.3 174.7L369.8 176.8L372.3 178.5L374.7 179.7L377.1 180.7L379.6 181.4L382.0 182.0L384.4 182.5L387.0 182.8L389.8 183.0L392.5 183.0L394.9 183.0L396.5 183.0" fill="none" stroke="#f7921e" stroke-width="1.4" stroke-linejoin="round" stroke-linecap="butt" />
<path d="M346.0 155.5L349.0 158.5" fill="none" stroke="#f7921e" stroke-width="1.4" stroke-linejoin="round" stroke-linecap="butt" />
<path d="M353.4 156.8L353.6 157.2L353.8 157.5L353.8 157.6L354.1 157.9L354.7 158.6L355.8 159.5L357.2 160.7L358.9 162.1L360.8 163.7L362.8 165.4L365.0 167.3L367.4 169.5L369.9 171.7L372.2 173.6L374.4 175.1L376.4 176.1L378.5 176.9L380.6 177.6L382.8 178.1L385.0 178.6L387.4 178.8L389.9 179.0L392.5 179.0L394.9 179.0L396.5 179.0" fill="none" stroke="#ff2e2e" stroke-width="0.6" stroke-dasharray="5 4" stroke-linejoin="round" stroke-linecap="butt" />
<path d="M346.6 161.2L346.7 161.3L346.9 161.7L347.5 162.5L348.2 163.4L349.3 164.4L350.6 165.6L352.1 166.9L353.8 168.3L355.7 169.8L357.6 171.4L359.7 173.3L362.1 175.5L364.7 177.8L367.4 180.0L370.2 181.9L373.1 183.4L375.8 184.5L378.5 185.3L381.1 185.9L383.8 186.4L386.7 186.8L389.7 187.0L392.5 187.0L394.9 187.0L396.5 187.0" fill="none" stroke="#ff2e2e" stroke-width="0.6" stroke-dasharray="5 4" stroke-linejoin="round" stroke-linecap="butt" />
<path d="M358.5 182.8L354.7 186.3L349.3 191.3L343.1 197.1L337.0 203.5L331.7 210.0L327.4 216.8L323.6 224.2L320.0 231.8L316.6 239.4L313.3 246.7L309.8 253.7L306.2 260.7L302.8 267.6L300.1 274.0L298.3 280.0L297.8 285.2L298.2 289.9L299.3 294.2L300.6 298.6L301.7 303.3L302.6 308.5L303.7 314.1L304.8 319.7L305.9 325.1L307.0 330.0L308.0 334.3L309.0 338.3L309.9 342.0L310.9 345.7L312.0 349.7L313.2 354.2L314.6 359.1L316.0 364.0L317.3 368.4L318.2 371.8L318.8 374.2L319.1 375.7L319.2 376.7L319.3 377.4L319.4 378.0" fill="none" stroke="#3333d6" stroke-width="0.65" stroke-linejoin="round" stroke-linecap="butt" />
<path d="M361.4 185.9L357.6 189.4L352.2 194.3L346.1 200.1L340.1 206.3L335.1 212.4L331.1 218.9L327.3 226.0L323.8 233.5L320.5 241.2L317.1 248.5L313.5 255.6L309.9 262.6L306.6 269.3L304.0 275.5L302.4 280.8L302.0 285.3L302.4 289.2L303.4 293.1L304.7 297.5L305.8 302.5L306.8 307.8L307.8 313.3L308.9 318.8L310.0 324.2L311.1 329.1L312.1 333.4L313.0 337.2L314.0 340.9L315.0 344.6L316.1 348.6L317.3 353.1L318.7 358.0L320.1 362.8L321.3 367.2L322.3 370.7L322.9 373.2L323.2 375.0L323.4 376.2L323.5 376.9L323.6 377.4" fill="none" stroke="#3333d6" stroke-width="0.65" stroke-linejoin="round" stroke-linecap="butt" />
<path d="M358.5 182.8L359.5 181.2L362.0 182.0L363.2 184.5L361.4 185.9" fill="none" stroke="#3333d6" stroke-width="0.65" stroke-linejoin="round" stroke-linecap="butt" />
<path d="M359.9 184.3L356.1 187.9L350.7 192.8L344.6 198.6L338.5 204.9L333.4 211.2L329.2 217.8L325.5 225.1L321.9 232.7L318.5 240.3L315.2 247.6L311.7 254.7L308.0 261.7L304.7 268.4L302.0 274.8L300.4 280.4L299.9 285.3L300.3 289.5L301.3 293.7L302.6 298.1L303.8 302.9L304.7 308.2L305.8 313.7L306.9 319.2L308.0 324.6L309.0 329.5L310.0 333.9L311.0 337.8L312.0 341.4L313.0 345.2L314.0 349.1L315.3 353.7L316.7 358.6L318.0 363.4L319.3 367.8L320.2 371.3L320.8 373.7L321.2 375.3L321.3 376.5L321.4 377.2L321.5 377.7" fill="none" stroke="#3333d6" stroke-width="0.5" stroke-dasharray="0.8 4" stroke-linejoin="round" stroke-linecap="butt" />
<path d="M317.0 401.4L315.7 406.3L313.8 413.3L311.6 421.1L309.5 428.5L307.2 435.9L304.8 443.7L302.6 450.7L301.0 455.5" fill="none" stroke="#3333d6" stroke-width="0.5" stroke-linejoin="round" stroke-linecap="butt" />
<path d="M320.9 402.4L319.5 407.3L317.6 414.3L315.5 422.2L313.3 429.6L311.1 437.1L308.6 444.9L306.4 451.9L304.8 456.7" fill="none" stroke="#3333d6" stroke-width="0.5" stroke-linejoin="round" stroke-linecap="butt" />
<path d="M318.9 401.9L317.6 406.8L315.7 413.8L313.5 421.6L311.4 429.1L309.2 436.5L306.7 444.3L304.5 451.3L302.9 456.1" fill="none" stroke="#3333d6" stroke-width="0.5" stroke-dasharray="0.8 4" stroke-linejoin="round" stroke-linecap="butt" />
<path d="M340.3 401.4L339.0 405.5L337.2 411.4L335.1 417.8L333.0 423.5L330.7 428.6L328.2 433.5L325.9 437.8L324.3 440.8" fill="none" stroke="#3333d6" stroke-width="0.5" stroke-linejoin="round" stroke-linecap="butt" />
<path d="M337.4 400.5L336.2 404.6L334.3 410.5L332.3 416.8L330.2 422.4L328.0 427.3L325.5 432.1L323.3 436.4L321.7 439.4" fill="none" stroke="#3333d6" stroke-width="0.5" stroke-linejoin="round" stroke-linecap="butt" />
<path d="M340.0 398.0L330.0 425.0L317.0 458.0" fill="none" stroke="#3333d6" stroke-width="0.65" stroke-linejoin="round" stroke-linecap="butt" />
<path d="M167.2 317.3L153.8 369.2L149.2 401.5L153.8 415.4L156.5 423.0" fill="none" stroke="#3333d6" stroke-width="0.65" stroke-linejoin="round" stroke-linecap="butt" />
<path d="M150.4 349.6L177.0 371.5L189.6 379.6" fill="none" stroke="#3333d6" stroke-width="0.5" stroke-linejoin="round" stroke-linecap="butt" />
<path d="M144.6 356.5L172.3 376.2" fill="none" stroke="#3333d6" stroke-width="0.5" stroke-dasharray="3 2" stroke-linejoin="round" stroke-linecap="butt" />
<path d="M146.0 390.0L154.8 422.4" fill="none" stroke="#2a2aa6" stroke-width="0.5" stroke-linejoin="round" stroke-linecap="butt" />
<path d="M17.5 423.7L18.8 421.4L20.5 418.1L22.7 414.3L25.0 410.6L27.5 407.5L30.4 404.9L33.8 402.6L37.3 400.5L40.3 398.8L42.4 397.5" fill="none" stroke="#3f9fe0" stroke-width="0.65" stroke-linejoin="round" stroke-linecap="butt" />
<path d="M21.5 423.0L22.6 421.2L24.2 418.5L26.0 415.5L28.0 412.5L30.0 410.0L32.2 407.9L34.7 405.9L37.3 404.1L39.5 402.6L41.0 401.5" fill="none" stroke="#3f9fe0" stroke-width="0.5" stroke-dasharray="4 2" stroke-linejoin="round" stroke-linecap="butt" />
<path d="M119.9 371.3L120.8 372.0L122.0 373.0L123.4 374.3L125.2 375.8L127.3 377.5L129.9 379.6L133.1 382.2L136.5 384.9L139.7 387.6L142.3 390.0L144.4 392.3L146.2 394.7L147.7 396.8L148.9 398.7L149.8 400.0" fill="none" stroke="#3f9fe0" stroke-width="0.65" stroke-dasharray="5 2" stroke-linejoin="round" stroke-linecap="butt" />
<path d="M42.4 420.0L51.2 419.4L63.7 418.0L72.4 417.4L83.1 416.2L99.4 414.2L117.3 410.0L132.3 405.5L139.8 400.0L137.3 392.0" fill="none" stroke="#22a02a" stroke-width="0.5" stroke-linejoin="round" stroke-linecap="butt" />
<path d="M153.5 393.0L167.8 386.2L177.3 382.5" fill="none" stroke="#22a02a" stroke-width="0.5" stroke-linejoin="round" stroke-linecap="butt" />
<circle cx="42.4" cy="420.0" r="1.9" fill="none" stroke="#22a02a" stroke-width="0.8"/>
<circle cx="51.2" cy="419.4" r="1.9" fill="none" stroke="#22a02a" stroke-width="0.8"/>
<circle cx="63.7" cy="418.0" r="1.9" fill="none" stroke="#22a02a" stroke-width="0.8"/>
<circle cx="72.4" cy="417.4" r="1.9" fill="none" stroke="#22a02a" stroke-width="0.8"/>
<circle cx="83.1" cy="416.2" r="1.9" fill="none" stroke="#22a02a" stroke-width="0.8"/>
<circle cx="99.4" cy="414.2" r="1.9" fill="none" stroke="#22a02a" stroke-width="0.8"/>
<circle cx="117.3" cy="410.0" r="1.9" fill="none" stroke="#22a02a" stroke-width="0.8"/>
<circle cx="132.3" cy="405.5" r="1.9" fill="none" stroke="#22a02a" stroke-width="0.8"/>
<circle cx="139.8" cy="400.0" r="1.9" fill="none" stroke="#22a02a" stroke-width="0.8"/>
<circle cx="137.3" cy="392.0" r="1.9" fill="none" stroke="#22a02a" stroke-width="0.8"/>
<circle cx="153.5" cy="393.0" r="1.9" fill="none" stroke="#22a02a" stroke-width="0.8"/>
<circle cx="167.8" cy="386.2" r="1.9" fill="none" stroke="#22a02a" stroke-width="0.8"/>
<circle cx="177.3" cy="382.5" r="1.9" fill="none" stroke="#22a02a" stroke-width="0.8"/>
<defs><pattern id="hT" width="2.2" height="2.2" patternUnits="userSpaceOnUse" patternTransform="rotate(-60)"><line x1="0" y1="1.1" x2="2.2" y2="1.1" stroke="#1f8d8d" stroke-width="0.55"/></pattern><pattern id="hB" width="2.2" height="2.2" patternUnits="userSpaceOnUse" patternTransform="rotate(-60)"><line x1="0" y1="1.1" x2="2.2" y2="1.1" stroke="#1f84c8" stroke-width="0.55"/></pattern></defs>
<path d="M95.3 353.1L99.0 352.7L99.4 355.4L102.8 355.4L105.8 367.9L98.3 368.6Z" fill="url(#hT)" stroke="#1f8d8d" stroke-width="0.8" stroke-linejoin="round" stroke-linecap="butt" />
<path d="M133.5 354.9L146.0 367.9L138.0 375.8L125.5 362.7Z" fill="url(#hB)" stroke="#1f84c8" stroke-width="0.8" stroke-linejoin="round" stroke-linecap="butt" />
<path d="M128.5 365.8L141.0 378.5" fill="none" stroke="#1f84c8" stroke-width="0.7" stroke-linejoin="round" stroke-linecap="butt" />
<path d="M63.0 384.0L68.3 383.0L69.0 394.5L63.8 395.5L66.0 390.0Z" fill="url(#hT)" stroke="#1f8d8d" stroke-width="0.8" stroke-linejoin="round" stroke-linecap="butt" />
<path d="M87.4 392.8L92.6 390.6L96.0 395.1L100.6 393.5L102.8 397.4L107.4 395.1L113.0 406.5L91.5 411.0Z" fill="url(#hB)" stroke="#1f84c8" stroke-width="0.8" stroke-linejoin="round" stroke-linecap="butt" />
<path d="M38.2 406.5L52.9 401.9L54.0 400.8L66.5 398.5L68.8 409.9L57.4 412.1L54.0 416.7L42.7 418.9Z" fill="url(#hT)" stroke="#1f8d8d" stroke-width="0.8" stroke-linejoin="round" stroke-linecap="butt" />
<path d="M38.2 406.5L57.4 412.1" fill="none" stroke="#1f8d8d" stroke-width="0.6" stroke-linejoin="round" stroke-linecap="butt" />
<path d="M52.9 401.9L54.0 416.7" fill="none" stroke="#1f8d8d" stroke-width="0.6" stroke-linejoin="round" stroke-linecap="butt" />
<path d="M463.2 227.0L463.7 227.5L464.5 228.2L465.3 229.1L466.2 230.2L466.9 231.6L467.6 233.3L468.3 235.4L469.0 237.7L469.4 240.1L469.6 242.7L469.3 245.4L468.7 248.2L468.0 251.2L467.3 254.3L466.9 257.4L467.0 260.7L467.3 264.3L467.7 267.8L468.0 271.1L467.8 274.0L467.2 276.4L466.2 278.5L465.0 280.3L463.7 281.9L462.3 283.2L460.8 284.3L459.1 285.1L457.3 285.7L455.6 286.0L454.0 286.0L452.5 285.7L451.1 285.1L449.8 284.2L448.6 283.0L447.5 281.4L446.5 279.4L445.7 277.0L444.9 274.3L444.3 271.4L443.8 268.5L443.4 265.3L443.1 261.9L442.9 258.3L442.8 254.9L442.9 251.9L443.1 249.3L443.5 246.9L444.0 244.7L444.7 242.7L445.7 240.8L447.1 239.0L448.8 237.4L450.6 236.0L452.4 234.6L454.0 233.4L455.3 232.3L456.5 231.2L457.6 230.3L458.6 229.5L459.5 228.8L460.4 228.2L461.3 227.8L462.1 227.5L462.7 227.2L463.2 227.0" fill="none" stroke="#ff2222" stroke-width="0.9" stroke-dasharray="1.3 0.8" stroke-linejoin="round" stroke-linecap="butt" />
<path d="M450.8 259.0h0.9M453.4 261.8h0.9M458.5 237.0h0.9M446.3 272.5h0.9M451.2 244.8h0.9M465.9 255.6h0.9M462.7 255.9h0.9M458.8 240.9h0.9M458.7 273.9h0.9M456.5 268.1h0.9M459.4 236.9h0.9M461.2 261.2h0.9M452.0 235.4h0.9M463.3 255.7h0.9M460.4 274.4h0.9M460.3 276.4h0.9M453.9 270.8h0.9M454.9 277.0h0.9M463.6 238.5h0.9M448.7 244.0h0.9M465.3 254.1h0.9M458.5 247.8h0.9" stroke="#ff2e2e" stroke-width="0.9" fill="none"/>
<circle cx="560.5" cy="146.5" r="0.8" fill="#e02020"/>
<text x="72.6" y="335.4" font-family="Liberation Sans, sans-serif" font-size="9.6" fill="#111" textLength="41.6" lengthAdjust="spacingAndGlyphs">Grankulla</text>
<text x="478.3" y="255.8" font-family="Liberation Sans, sans-serif" font-size="9.6" fill="#111" textLength="63.3" lengthAdjust="spacingAndGlyphs">Mjölnarbacken</text>
<path d="M594.3 65.4H633.2M644.6 65.4H683.3M594.3 62.4V68.4M683.3 62.4V68.4" stroke="#ff2a2a" stroke-width="0.9" fill="none"/>
<text x="638.9" y="68.2" text-anchor="middle" font-family="Liberation Sans, sans-serif" font-size="7.6" fill="#ff2a2a">50</text>
<path d="M22.1 442.1L31.2 459.4H26.5V485.4H17.7V459.4H13Z" fill="#fff" stroke="#4a4a4a" stroke-width="0.7"/>
<text x="22.1" y="483.8" text-anchor="middle" font-family="Liberation Serif, serif" font-size="6.6" fill="#222">N</text>
<path d="M29.5 441l2.6 2.6m0 -2.6l-2.6 2.6" stroke="#f7921e" stroke-width="0.6"/>
<rect x="123.65" y="26.2" width="0.7" height="15" fill="#d2d2d2"/>
<rect x="145.25" y="26.2" width="0.7" height="15" fill="#d2d2d2"/>
<rect x="217.15" y="26.2" width="0.7" height="15" fill="#d2d2d2"/>
<rect x="324.15" y="26.2" width="0.7" height="15" fill="#d2d2d2"/>
<rect x="362.15" y="26.2" width="0.7" height="15" fill="#d2d2d2"/>
<rect x="452.05" y="26.2" width="0.7" height="15" fill="#d2d2d2"/>
<rect x="491.35" y="26.2" width="0.7" height="15" fill="#d2d2d2"/>
<path d="M6.80 35.40q0.2 -2.2 2.2 -2.4" fill="none" stroke="#111" stroke-width="1.0" />
<path d="M8.40 32.10l1.6 0.9l-1.5 0.9z" fill="#111" stroke="#111" stroke-width="0.3" />
<rect x="10.90" y="29.80" width="4.50" height="5.60" fill="#fff" stroke="#222" stroke-width="0.7" />
<path d="M23.70 35.00q0.2 -2.2 2.2 -2.4" fill="none" stroke="#111" stroke-width="1.0" />
<path d="M25.30 31.70l1.6 0.9l-1.5 0.9z" fill="#111" stroke="#111" stroke-width="0.3" />
<rect x="28.10" y="29.80" width="4.70" height="5.10" fill="#fff" stroke="#222" stroke-width="0.7" />
<rect x="23.00" y="36.10" width="4.80" height="2.30" fill="#ddd" stroke="#222" stroke-width="0.6" />
<path d="M23.70 37.25h2.2" fill="none" stroke="#f03030" stroke-width="0.7" />
<path d="M40.70 35.00q0.2 -2.2 2.2 -2.4" fill="none" stroke="#111" stroke-width="1.0" />
<path d="M42.30 31.70l1.6 0.9l-1.5 0.9z" fill="#111" stroke="#111" stroke-width="0.3" />
<path d="M44.5 30l5 5M46 29l4.5 4.5M44.5 32l3.5 3.5M48 29l2.5 2.5M44.5 34.5l5.5 -5.5M45 31.5l2.5 -2.5" fill="none" stroke="#444" stroke-width="0.5" />
<rect x="39.80" y="36.10" width="4.80" height="2.30" fill="#ddd" stroke="#222" stroke-width="0.6" />
<path d="M40.50 37.25h2.2" fill="none" stroke="#f03030" stroke-width="0.7" />
<rect x="57.20" y="30.00" width="4.40" height="5.10" fill="#fff" stroke="#222" stroke-width="0.7" />
<path d="M62.30 32.40q2.2 0 2.4 2.4" fill="none" stroke="#111" stroke-width="0.9" />
<path d="M63.70 34.20l1 1.6l1 -1.6z" fill="#111" stroke="#111" stroke-width="0.3" />
<rect x="62.20" y="36.10" width="4.80" height="2.30" fill="#ddd" stroke="#222" stroke-width="0.6" />
<path d="M62.90 37.25h2.2" fill="none" stroke="#f03030" stroke-width="0.7" />
<rect x="74.30" y="30.20" width="3.80" height="4.60" fill="#fff" stroke="#222" stroke-width="0.7" />
<path d="M79.60 30.80q2.2 0 2.4 2.4" fill="none" stroke="#111" stroke-width="0.9" />
<path d="M81.00 32.60l1 1.6l1 -1.6z" fill="#111" stroke="#111" stroke-width="0.3" />
<rect x="80.30" y="34.50" width="4.20" height="4.60" fill="#fff" stroke="#111" stroke-width="0.8" />
<text x="93.60" y="36.20" font-family="Liberation Sans, sans-serif" font-size="8.6" font-weight="bold" fill="#f02020" text-anchor="middle" >?</text>
<path d="M96.50 32.60q2.2 0 2.4 2.4" fill="none" stroke="#111" stroke-width="0.9" />
<path d="M97.90 34.40l1 1.6l1 -1.6z" fill="#111" stroke="#111" stroke-width="0.3" />
<rect x="95.80" y="36.20" width="4.80" height="2.30" fill="#ddd" stroke="#222" stroke-width="0.6" />
<path d="M96.50 37.35h2.2" fill="none" stroke="#f03030" stroke-width="0.7" />
<rect x="108.70" y="30.30" width="4.40" height="4.90" fill="#fff" stroke="#222" stroke-width="0.7" />
<path d="M113.60 31.80q2.2 0 2.4 2.4" fill="none" stroke="#111" stroke-width="0.9" />
<path d="M115.00 33.60l1 1.6l1 -1.6z" fill="#111" stroke="#111" stroke-width="0.3" />
<path d="M131.8 31l3.5 -2.2q2.6 0.4 2.6 4.2q0 3.4 -1.8 5.3l-4.4 -0.3z" fill="#111" stroke="#111" stroke-width="0.8" />
<path d="M134.8 30.2q2 -0.6 2.6 2.2q0.2 2.6 -0.9 4.2l-2 -0.2z" fill="#fff" stroke="#fff" stroke-width="0.3" />
<path d="M133.6 36.4l3 0.3" fill="none" stroke="#e02020" stroke-width="0.6" />
<path d="M151.6 34.5l1.6 -2.6h4.6l1.4 2.6v2.2h-7.6z" fill="#bdbdbd" stroke="#333" stroke-width="0.6" />
<path d="M153.4 31.4h4.2v-1h-3.4z" fill="#444" stroke="#222" stroke-width="0.5" />
<path d="M152 36.9h7" fill="none" stroke="#222" stroke-width="0.8" />
<path d="M154.5 36h2.2" fill="none" stroke="#b0b000" stroke-width="0.8" />
<rect x="168.30" y="33.20" width="8.60" height="4.30" fill="#e4e4e4" stroke="#444" stroke-width="0.7" />
<path d="M170.6 33.2v4.3M174.4 33.2v4.3M168.3 35.3h8.6" fill="none" stroke="#555" stroke-width="0.5" />
<text x="168.20" y="31.80" font-family="Liberation Sans, sans-serif" font-size="3.4" font-weight="bold" fill="#222" text-anchor="start" >SC</text>
<rect x="185.20" y="30.00" width="10.30" height="8.20" fill="#fff" stroke="#333" stroke-width="0.8" />
<path d="M193.3 30v8M185.2 37h10.3" fill="none" stroke="#333" stroke-width="0.7" />
<text x="185.30" y="32.60" font-family="Liberation Sans, sans-serif" font-size="3" font-weight="bold" fill="#222" text-anchor="start" >SC</text>
<rect x="202.20" y="30.30" width="10.60" height="8.00" fill="#fff" stroke="#444" stroke-width="0.8" />
<path d="M204 31.5l5 5.5M206 31l4.5 5M204 36.5l5 -5M206.5 37l4 -5M202.2 38.3h10.6" fill="none" stroke="#777" stroke-width="0.5" />
<rect x="223.40" y="29.30" width="9.20" height="7.60" fill="#fdfdfd" stroke="#555" stroke-width="0.9" />
<path d="M224.70 38.3h6.6" fill="none" stroke="#888" stroke-width="0.9" />
<path d="M226.50 37.2h3" fill="none" stroke="#999" stroke-width="0.7" />
<path d="M225 30.6l1.6 1.6M231 30.6l-1.6 1.6M225 35.6l1.6 -1.6M231 35.6l-1.6 -1.6" fill="none" stroke="#222" stroke-width="0.7" />
<path d="M224.7 30.4h1.5M224.9 30.3v1.4M231.3 30.4h-1.5M231.1 30.3v1.4M224.7 35.8h1.5M224.9 35.9v-1.4M231.3 35.8h-1.5M231.1 35.9v-1.4" fill="none" stroke="#222" stroke-width="0.6" />
<rect x="240.40" y="29.30" width="9.20" height="7.60" fill="#fdfdfd" stroke="#555" stroke-width="0.9" />
<path d="M241.70 38.3h6.6" fill="none" stroke="#888" stroke-width="0.9" />
<path d="M243.50 37.2h3" fill="none" stroke="#999" stroke-width="0.7" />
<path d="M244 35.4q2.6 -0.4 3 -3.6" fill="none" stroke="#111" stroke-width="1.2" />
<path d="M243.6 35.6h2.6" fill="none" stroke="#c8c800" stroke-width="1" />
<rect x="257.40" y="29.30" width="9.20" height="7.60" fill="#fdfdfd" stroke="#555" stroke-width="0.9" />
<path d="M258.70 38.3h6.6" fill="none" stroke="#888" stroke-width="0.9" />
<path d="M260.50 37.2h3" fill="none" stroke="#999" stroke-width="0.7" />
<path d="M259.4 33h5.4M259.4 33l1.8 -1.6M259.4 33l1.8 1.6" fill="none" stroke="#222" stroke-width="0.7" />
<rect x="274.90" y="29.30" width="9.20" height="7.60" fill="#fdfdfd" stroke="#555" stroke-width="0.9" />
<path d="M276.20 38.3h6.6" fill="none" stroke="#888" stroke-width="0.9" />
<path d="M278.00 37.2h3" fill="none" stroke="#999" stroke-width="0.7" />
<path d="M276.8 33h5.4M282.2 33l-1.8 -1.6M282.2 33l-1.8 1.6" fill="none" stroke="#222" stroke-width="0.7" />
<rect x="292.40" y="29.30" width="9.20" height="7.60" fill="#fdfdfd" stroke="#555" stroke-width="0.9" />
<path d="M293.70 38.3h6.6" fill="none" stroke="#888" stroke-width="0.9" />
<path d="M295.50 37.2h3" fill="none" stroke="#999" stroke-width="0.7" />
<circle cx="296.4" cy="32.4" r="1.7" fill="none" stroke="#222" stroke-width="0.7"/>
<path d="M297.6 33.7l2 2M295.4 32.4h2M296.4 31.4v2" fill="none" stroke="#222" stroke-width="0.7" />
<rect x="309.40" y="29.30" width="9.20" height="7.60" fill="#fdfdfd" stroke="#555" stroke-width="0.9" />
<path d="M310.70 38.3h6.6" fill="none" stroke="#888" stroke-width="0.9" />
<path d="M312.50 37.2h3" fill="none" stroke="#999" stroke-width="0.7" />
<circle cx="313.4" cy="32.4" r="1.7" fill="none" stroke="#222" stroke-width="0.7"/>
<path d="M314.6 33.7l2 2M312.4 32.4h2" fill="none" stroke="#222" stroke-width="0.7" />
<path d="M333 31.8h2.6q2.2 0 2.2 2.3q0 2.3 -2.2 2.3h-3" fill="none" stroke="#ff10e8" stroke-width="1.3" />
<path d="M334 29.8l-2.2 2l2.2 2z" fill="#ff10e8" stroke="#ff10e8" stroke-width="0.3" />
<path d="M354.2 31.8h-2.6q-2.2 0 -2.2 2.3q0 2.3 2.2 2.3h3" fill="none" stroke="#ff10e8" stroke-width="1.3" />
<path d="M353.2 29.8l2.2 2l-2.2 2z" fill="#ff10e8" stroke="#ff10e8" stroke-width="0.3" />
<path d="M369.6 35.6h3M371.1 34.1v3" fill="none" stroke="#f01818" stroke-width="0.9" />
<text x="376.20" y="35.60" font-family="Liberation Sans, sans-serif" font-size="6.6" font-weight="bold" fill="#111" text-anchor="middle" >?</text>
<path d="M388.2 34.6h4M390.2 32.6v4" fill="none" stroke="#f01818" stroke-width="0.9" />
<path d="M404 31.5h3M405.5 30v3M408.6 34.4h3M410.1 32.9v3M404.6 37h3M406.1 35.5v3" fill="none" stroke="#f01818" stroke-width="0.9" />
<path d="M420.3 29.8l3.2 3.4l1 3q1.8 1.2 4.4 1.7" fill="none" stroke="#20e0e8" stroke-width="0.9" />
<path d="M422.8 36.2h3M424.3 34.7v3" fill="none" stroke="#f01818" stroke-width="0.9" />
<text x="441.60" y="37.20" font-family="Liberation Sans, sans-serif" font-size="5.6" font-weight="bold" fill="#111" text-anchor="middle" textLength="8.6" lengthAdjust="spacingAndGlyphs">TXT</text>
<path d="M458.4 37.9h8.8" fill="none" stroke="#111" stroke-width="0.9" />
<path d="M458.6 37l7.6 -5.6" fill="none" stroke="#f02020" stroke-width="0.8" />
<path d="M464.6 29.6l1.2 3.4l-2.6 3" fill="none" stroke="#e020e0" stroke-width="0.9" />
<path d="M460 31.5l6.6 5.6" fill="none" stroke="#30c030" stroke-width="0.5" />
<path d="M476.6 30h7.8v8h-3.6v-3.4h-4.2z" fill="#12d212" stroke="#0a7a0a" stroke-width="0.6" />
<path d="M478.4 32.2l1.4 1.2l2 -1.8" fill="none" stroke="#084808" stroke-width="0.6" />
<circle cx="498.5" cy="30.9" r="1" fill="none" stroke="#222" stroke-width="0.6"/>
<circle cx="503.3" cy="33.6" r="1" fill="none" stroke="#222" stroke-width="0.6"/>
<path d="M497.2 34.8l7 -5" fill="none" stroke="#222" stroke-width="0.6" />
<text x="501.00" y="39.20" font-family="Liberation Sans, sans-serif" font-size="3.4" font-weight="bold" fill="#222" text-anchor="middle" >XYZ</text>
<path d="M515.6 33.8l2.4 4l3.8 -8.4" fill="none" stroke="#f01010" stroke-width="1.4" />
<text x="514.60" y="31.60" font-family="Liberation Sans, sans-serif" font-size="2.8" font-weight="normal" fill="#333" text-anchor="middle" >N</text>
<text x="518.20" y="31.60" font-family="Liberation Sans, sans-serif" font-size="2.8" font-weight="normal" fill="#333" text-anchor="middle" >N</text>
<path d="M523 31v7.5" fill="none" stroke="#555" stroke-width="0.5" stroke-dasharray="1 1"/>
<path d="M532.6 38.2l3.6 -5.6l3.4 5.6z" fill="none" stroke="#18d818" stroke-width="0.9" />
<text x="531.40" y="30.60" font-family="Liberation Sans, sans-serif" font-size="2.8" font-weight="normal" fill="#222" text-anchor="middle" >IT</text>
<text x="539.60" y="32.40" font-family="Liberation Sans, sans-serif" font-size="2.8" font-weight="normal" fill="#222" text-anchor="middle" >N</text>
<circle cx="536.2" cy="35.8" r="0.8" fill="none" stroke="#333" stroke-width="0.5"/>
<rect x="544.60" y="25.40" width="17.20" height="16.60" fill="#f6f6f6" stroke="#bdbdbd" stroke-width="0.7" />
<path d="M549.6 38l6 -6.6M549.8 33.4l2 2" fill="none" stroke="#666" stroke-width="0.5" />
<text x="557.60" y="30.60" font-family="Liberation Sans, sans-serif" font-size="3.4" font-weight="normal" fill="#222" text-anchor="middle" >2!</text>
<path d="M4.6 10.8l1.6 -5.2l5.6 -2.2v7.6z" fill="#d8dcdf" stroke="#cfd4d8" stroke-width="0.3" />
<path d="M5 5.6l2.4 -2.6l2 1.4l-2.6 2.6z" fill="#20c0d0" stroke="#18b8c8" stroke-width="0.3" />
<path d="M6.2 10l5 -6.4" fill="none" stroke="#556" stroke-width="0.5" />
<path d="M647.6 7.4h5.4" fill="none" stroke="#fff" stroke-width="0.8" />
<rect x="669.20" y="4.70" width="5.20" height="5.20" fill="none" stroke="#5aa6e6" stroke-width="0.7" rx="0.8"/>
<path d="M691.2 5l4.8 4.8M696 5l-4.8 4.8" fill="none" stroke="#fff" stroke-width="1.0" />
</svg>
</div></body></html>
